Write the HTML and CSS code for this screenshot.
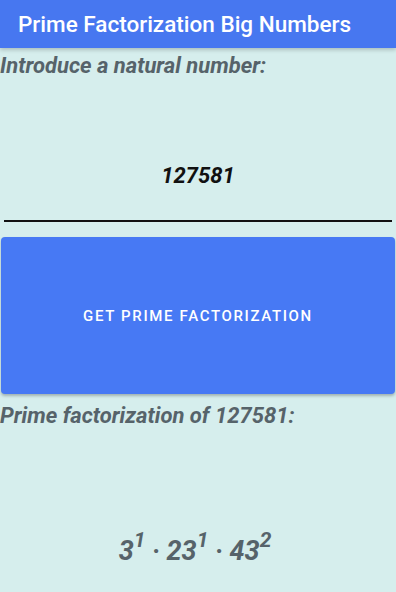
FILE: index.html
```html
<!DOCTYPE html>
<html lang="en">
<head>
    <meta charset="UTF-8">
    <meta name="viewport" content="width=device-width, initial-scale=1.0">
    <title>Prime Factorization Big Numbers</title>
    <link rel="stylesheet" href="styles.css">
</head>
<body>
    <div class="app-bar">Prime Factorization Big Numbers</div>

    <div class="content">
        <label class="prompt" for="numberInput">Introduce a natural number:</label>

        <div class="input-wrap">
            <input type="text" id="numberInput" value="127581">
        </div>

        <button class="factor-btn">Get prime factorization</button>

        <div class="prompt result-title">Prime factorization of 127581:</div>

        <div class="result">
            3<sup>1</sup> · 23<sup>1</sup> · 43<sup>2</sup>
        </div>
    </div>
</body>
</html>
```

FILE: styles.css
```css
body {
    margin: 0;
    width: 396px;
    height: 592px;
    overflow: hidden;
    font-family: Roboto, "Noto Sans", sans-serif;
    background-color: #d6eeed;
}
.app-bar {
    height: 48px;
    box-sizing: border-box;
    padding-left: 18px;
    display: flex;
    align-items: center;
    background-color: #4777f0;
    color: #fff;
    font-size: 22.5px;
    font-weight: 500;
    box-shadow: 0 2px 4px rgba(0, 0, 0, 0.2);
    position: relative;
}
.content {
    display: flex;
    flex-direction: column;
}
.prompt {
    display: block;
    font-size: 22px;
    font-weight: bold;
    font-style: italic;
    color: #56636a;
    margin-top: 5px;
    line-height: 26px;
}
.input-wrap {
    padding: 0 4px;
    margin-top: 84px;
}
.input-wrap input {
    width: 100%;
    box-sizing: border-box;
    border: none;
    border-bottom: 2px solid #111;
    background: transparent;
    font-family: inherit;
    font-size: 22px;
    font-weight: bold;
    font-style: italic;
    color: #111;
    text-align: center;
    padding: 0 0 32px 0;
    outline: none;
}
.factor-btn {
    margin: 15px 1px 0 1px;
    height: 157px;
    border: none;
    border-radius: 4px;
    background-color: #4779f4;
    color: #fff;
    font-family: inherit;
    font-size: 15px;
    font-weight: 500;
    letter-spacing: 1.65px;
    text-transform: uppercase;
    box-shadow: 0 2px 3px rgba(0, 0, 0, 0.25);
}
.result-title {
    margin-top: 9px;
}
.result {
    margin-top: 106px;
    text-align: center;
    font-size: 27px;
    font-weight: bold;
    font-style: italic;
    color: #56636a;
    padding-right: 6px;
}
.result sup {
    font-size: 21px;
    line-height: 0;
    vertical-align: 13px;
}
```
